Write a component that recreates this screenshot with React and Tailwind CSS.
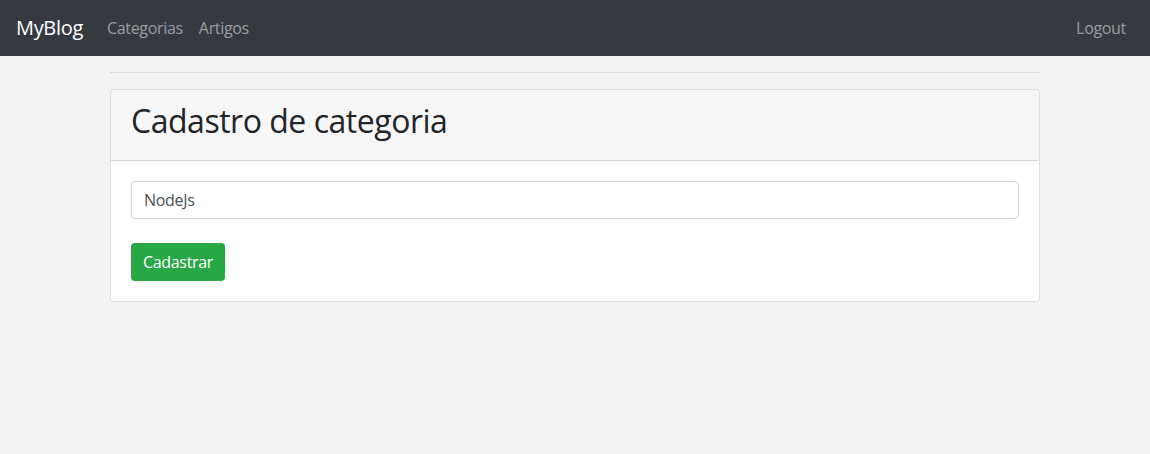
import React, { useState } from 'react';

const App = () => {
  const [name, setName] = useState('NodeJs');

  return (
    <div className="min-h-screen bg-[#f3f3f3] text-[#212529] font-['Open_Sans',sans-serif] tracking-[-0.02em]">
      <nav className="h-14 bg-[#343a40] flex items-center justify-between px-4">
        <div className="flex items-center">
          <a href="#" className="text-white text-[20px] mr-4">MyBlog</a>
          <a href="#" className="text-white/50 px-2">Categorias</a>
          <a href="#" className="text-white/50 px-2">Artigos</a>
        </div>
        <a href="#" className="text-white/50 px-2">Logout</a>
      </nav>

      <div className="w-[960px] mx-auto px-[15px]">
        <hr className="my-4 border-t border-black/10" />

        <div className="bg-white border border-black/[0.125] rounded">
          <div className="bg-black/[0.03] border-b border-black/[0.125] px-5 pt-3 pb-3">
            <h2 className="text-[32px] leading-[1.2] font-medium mb-2 tracking-[-0.015em]">Cadastro de categoria</h2>
          </div>
          <div className="p-5">
            <form onSubmit={(e) => e.preventDefault()}>
              <input
                type="text"
                value={name}
                onChange={(e) => setName(e.target.value)}
                className="w-full h-[38px] px-3 py-1.5 text-[#495057] bg-white border border-[#ced4da] rounded outline-none"
              />
              <button
                type="submit"
                className="mt-6 h-[38px] px-3 bg-[#28a745] text-white rounded"
              >
                Cadastrar
              </button>
            </form>
          </div>
        </div>
      </div>
    </div>
  );
};

export default App;
